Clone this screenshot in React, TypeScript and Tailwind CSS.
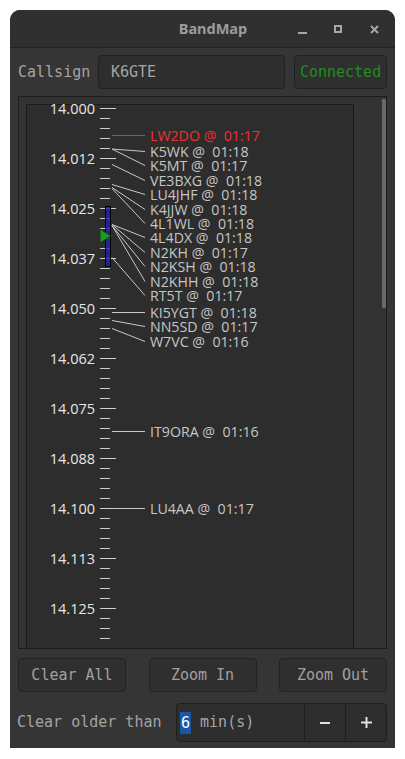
import React from 'react';

const ticks = Array.from({ length: 54 }, (_, i) => 109 + i * 10);
const labels = ['14.000', '14.012', '14.025', '14.037', '14.050', '14.062', '14.075', '14.088', '14.100', '14.113', '14.125'];

const spots = [
  { call: 'LW2DO', time: '01:17', from: 136, to: 136, red: true },
  { call: 'K5WK', time: '01:18', from: 149.5, to: 152 },
  { call: 'K5MT', time: '01:17', from: 149.5, to: 166 },
  { call: 'VE3BXG', time: '01:18', from: 165, to: 181 },
  { call: 'LU4JHF', time: '01:18', from: 185, to: 195 },
  { call: 'K4JJW', time: '01:18', from: 188, to: 210 },
  { call: '4L1WL', time: '01:18', from: 189, to: 224 },
  { call: '4L4DX', time: '01:18', from: 225, to: 238 },
  { call: 'N2KH', time: '01:17', from: 225, to: 253 },
  { call: 'N2KSH', time: '01:18', from: 226, to: 267 },
  { call: 'N2KHH', time: '01:18', from: 226, to: 282 },
  { call: 'RT5T', time: '01:17', from: 258, to: 296 },
  { call: 'KI5YGT', time: '01:18', from: 313, to: 313 },
  { call: 'NN5SD', time: '01:17', from: 321, to: 327 },
  { call: 'W7VC', time: '01:16', from: 329, to: 342 },
  { call: 'IT9ORA', time: '01:16', from: 432, to: 432 },
  { call: 'LU4AA', time: '01:17', from: 509, to: 509 },
];

const mono = { fontFamily: '"DejaVu Sans Mono", "Liberation Mono", monospace' };

const BandScene = () => (
  <svg className="block" width="368" height="551" viewBox="19 98 368 551" style={{ fontFamily: '"Open Sans", "Noto Sans", sans-serif' }}>
    <rect x="26.5" y="105.5" width="327" height="560" fill="#2d2d2d" stroke="#1c1c1c" />
    {ticks.map((y, i) => (
      <line key={y} x1="100" x2={i % 5 === 0 ? 116 : 110} y1={y + 0.5} y2={y + 0.5} stroke="#d0d0d0" strokeWidth="1" />
    ))}
    {labels.map((l, i) => (
      <text key={l} x="95" y={109 + i * 50 + 5.5} textAnchor="end" fontSize="14.5" fill="#e6e6e6">
        {l}
      </text>
    ))}
    <rect x="105.5" y="207.5" width="5" height="60" fill="#2020b0" fillOpacity="0.8" stroke="#000" />
    <polygon points="100,230 100,244 111,237" fill="#1e9a1e" stroke="#0f3f0f" />
    {spots.map((s) => (
      <g key={s.call}>
        <line x1="112" y1={s.from + 0.5} x2="145" y2={s.to + 0.5} stroke={s.red ? '#e8322f' : '#c8c8c8'} strokeWidth="1" />
        <text x="150" y={s.to + 5.5} fontSize="14.2" fill={s.red ? '#f0302e' : '#c6c6c6'} xmlSpace="preserve">
          {`${s.call} @  ${s.time}`}
        </text>
      </g>
    ))}
  </svg>
);

const App = () => {
  return (
    <div className="w-[405px] h-[759px] bg-white pt-[10px] pl-[10px]">
      <div className="w-[385px] h-[738px] bg-[#353535] rounded-t-[10px] overflow-hidden flex flex-col">
        <div className="h-[38px] shrink-0 bg-[#303030] border-b border-[#222] relative flex items-center justify-center">
          <span className="text-[14.5px] font-bold text-[#9c9c9c] ml-[21px]" style={{ fontFamily: '"Noto Sans", sans-serif' }}>
            BandMap
          </span>
          <span className="absolute left-[288px] top-[22px] w-[9px] h-[2px] bg-[#a8a8a8]" />
          <span className="absolute left-[324px] top-[15px] w-[8px] h-[8px] border-[2px] border-[#a8a8a8]" />
          <svg className="absolute left-[360px] top-[15px]" width="9" height="9" viewBox="0 0 9 9">
            <path d="M1 1L8 8M8 1L1 8" stroke="#a8a8a8" strokeWidth="1.8" />
          </svg>
        </div>

        <div className="flex items-center px-[8px] pt-[7px] gap-[8px]" style={mono}>
          <span className="text-[15px] text-[#a4a4a4] w-[72px] shrink-0">Callsign</span>
          <div className="w-[189px] h-[34px] rounded-[4px] bg-[#2e2e2e] border border-[#202020] flex items-center px-[12px] text-[15px] text-[#a4a4a4]">
            K6GTE
          </div>
          <div className="w-[94px] h-[34px] rounded-[4px] bg-[#2f2f2f] border border-[#202020] flex items-center justify-center text-[15px] text-[#1e8e1e] ml-[1px]">
            Connected
          </div>
        </div>

        <div className="mx-[8px] mt-[7px] h-[553px] border border-[#1c1c1c] bg-[#333333] relative overflow-hidden">
          <BandScene />
          <div className="absolute left-[363px] top-[2px] w-[4px] h-[209px] bg-[#6a6a6a] rounded-[1px]" />
        </div>

        <div className="flex justify-between px-[8px] mt-[9px]" style={mono}>
          {['Clear All', 'Zoom In', 'Zoom Out'].map((b) => (
            <div key={b} className="w-[108px] h-[34px] rounded-[4px] bg-[#2f2f2f] border border-[#222] flex items-center justify-center text-[15px] text-[#a0a0a0]">
              {b}
            </div>
          ))}
        </div>

        <div className="flex items-center px-[7px] mt-[11px]" style={mono}>
          <span className="text-[15px] text-[#a4a4a4] w-[159px] shrink-0">Clear older than</span>
          <div className="w-[211px] h-[39px] rounded-[4px] bg-[#2d2d2d] border border-[#1f1f1f] flex items-stretch">
            <div className="flex-1 flex items-center pl-[3px] text-[15px] text-[#a4a4a4]">
              <span className="bg-[#1b56a8] text-white px-[1px] leading-[22px]">6</span>
              <span className="whitespace-pre"> min(s)</span>
            </div>
            <div className="w-[41px] border-l border-[#1f1f1f] flex items-center justify-center">
              <span className="w-[10px] h-[2px] bg-[#e0e0e0]" />
            </div>
            <div className="w-[41px] border-l border-[#1f1f1f] flex items-center justify-center">
              <svg width="11" height="11" viewBox="0 0 11 11">
                <path d="M5.5 0V11M0 5.5H11" stroke="#e0e0e0" strokeWidth="2" />
              </svg>
            </div>
          </div>
        </div>
      </div>
    </div>
  );
};

export default App;
